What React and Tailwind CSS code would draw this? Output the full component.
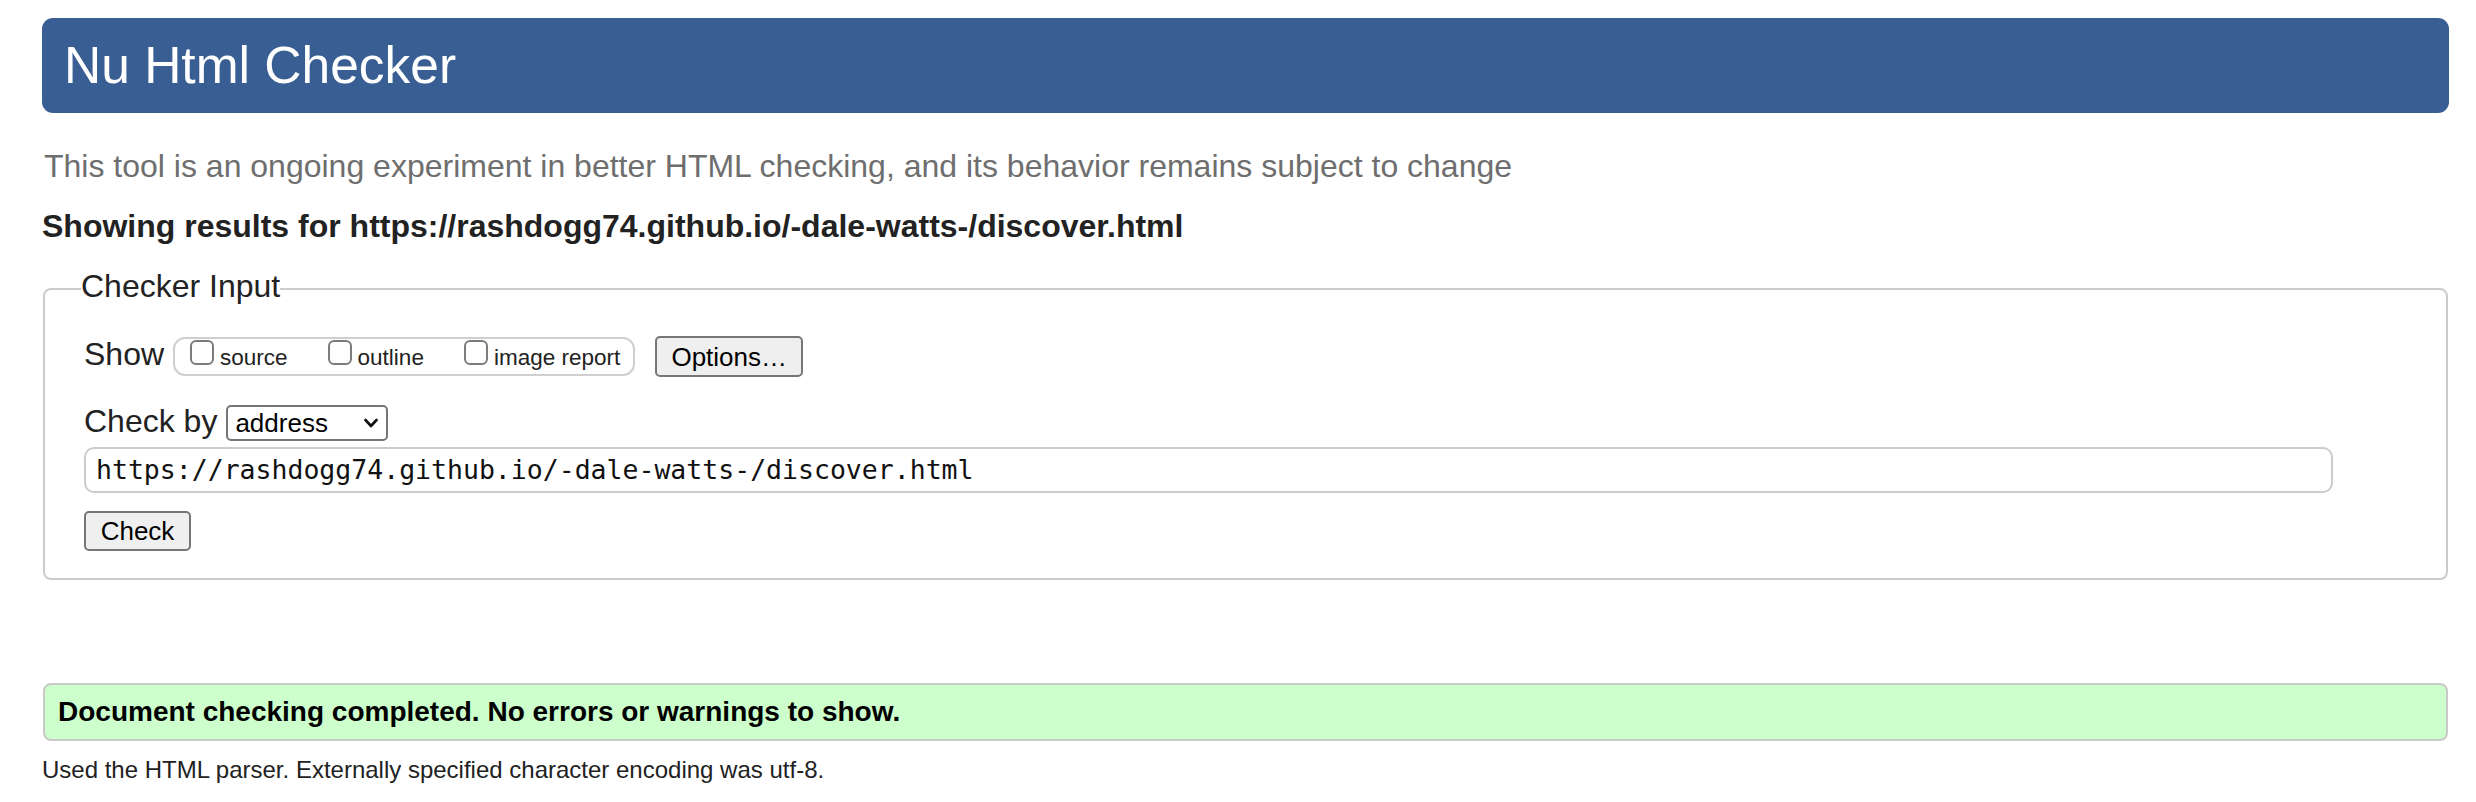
import React from 'react';

// Nu Html Checker – results page
function Tick({ label, first }) {
  return (
    <>
      <span className={`${first ? '' : 'ml-[40px]'} w-[24px] h-[25px] rounded-[6px] border-2 border-[#7b7b7b] bg-white`} />
      <span className="ml-[6px] text-[22.5px] leading-[24px] text-[#222]">{label}</span>
    </>
  );
}

export default function App() {
  return (
    <div className="min-h-screen bg-white pt-[18px] pl-[42px] pr-[27px] font-[Liberation_Sans,Arial,sans-serif] text-[#222]">
      {/* header */}
      <div className="h-[95px] rounded-[11px] bg-[#395e93] flex items-center pl-[22px]">
        <h1 className="text-[51.5px] leading-none text-white">Nu Html Checker</h1>
      </div>

      <p className="mt-[33px] ml-[2px] text-[32px] leading-[40px] text-[#6e6e6e]">
        This tool is an ongoing experiment in better HTML checking, and its behavior remains subject to change
      </p>

      <p className="mt-[20px] text-[32px] leading-[40px] font-bold text-[#222]">
        Showing results for https://rashdogg74.github.io/-dale-watts-/discover.html
      </p>

      {/* checker input */}
      <fieldset className="mt-[23px] mx-px border-2 border-[#cccccc] rounded-[8px] pl-[39px] pt-[27px] pb-[27px]">
        <legend className="-ml-[3px] text-[32px] leading-[34px] pb-[6px] text-[#222]">Checker Input</legend>

        <div className="flex items-center h-[41px]">
          <span className="text-[32px] leading-[37px] pb-[4px]">Show</span>
          <div className="ml-[9px] h-[39px] flex items-baseline pt-[1px] pl-[15px] pr-[13px] border-2 border-[#cfcfcf] rounded-[12px]">
            <Tick label="source" first />
            <Tick label="outline" />
            <Tick label="image report" />
          </div>
          <button className="ml-[20px] w-[148px] h-[41px] bg-[#efefef] border-2 border-[#767676] rounded-[5px] text-[26px] leading-none text-black">
            Options…
          </button>
        </div>

        <div className="mt-[28px] flex items-center h-[36px]">
          <span className="text-[32px] leading-[32px] pb-[4px]">Check by</span>
          <div className="ml-[9px] w-[162px] h-[36px] border-2 border-[#767676] rounded-[5px] bg-white flex items-center justify-between pl-[7px] pr-[8px]">
            <span className="text-[26px] leading-none text-black">address</span>
            <svg width="14" height="10" viewBox="0 0 14 10">
              <polyline points="1.5,2 7,8 12.5,2" fill="none" stroke="#111" strokeWidth="2.6" strokeLinecap="round" strokeLinejoin="round" />
            </svg>
          </div>
        </div>

        <div className="mt-[6px] mr-[113px] h-[46px] border-2 border-[#cccccc] rounded-[10px] flex items-center pl-[10px]">
          <span className="font-[DejaVu_Sans_Mono,monospace] text-[26.5px] leading-none text-[#111]">
            https://rashdogg74.github.io/-dale-watts-/discover.html
          </span>
        </div>

        <button className="mt-[18px] block w-[107px] h-[40px] bg-[#efefef] border-2 border-[#767676] rounded-[5px] text-[26px] leading-none text-black">
          Check
        </button>
      </fieldset>

      {/* result */}
      <div className="mt-[103px] mx-px h-[58px] border-2 border-[#c9c9c9] rounded-[8px] bg-[#ccffcc] flex items-center pl-[13px]">
        <p className="text-[28px] leading-none font-bold text-black">
          Document checking completed. No errors or warnings to show.
        </p>
      </div>

      <p className="mt-[14px] text-[24px] leading-[30px] text-[#222]">
        Used the HTML parser. Externally specified character encoding was utf-8.
      </p>
    </div>
  );
}
